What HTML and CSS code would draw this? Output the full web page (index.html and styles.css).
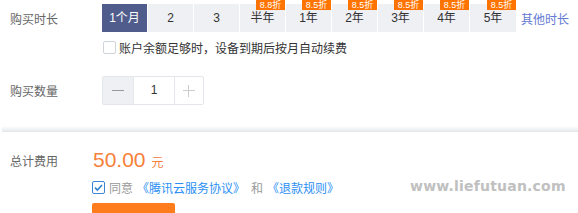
FILE: index.html
```html
<!DOCTYPE html>
<html lang="zh-CN">
<head>
<meta charset="utf-8">
<link rel="stylesheet" href="styles.css">
</head>
<body>
<div class="page">
  <div class="row row-duration">
    <div class="label">购买时长</div>
    <div class="tabs">
      <div class="tab active">1个月</div>
      <div class="tab">2</div>
      <div class="tab">3</div>
      <div class="tab">半年<span class="badge">8.8折</span></div>
      <div class="tab">1年<span class="badge">8.5折</span></div>
      <div class="tab">2年<span class="badge">8.5折</span></div>
      <div class="tab">3年<span class="badge">8.5折</span></div>
      <div class="tab">4年<span class="badge">8.5折</span></div>
      <div class="tab">5年<span class="badge">8.5折</span></div>
    </div>
    <a class="other">其他时长</a>
  </div>
  <div class="row-renew">
    <span class="checkbox"></span>
    <span class="renew-text">账户余额足够时，设备到期后按月自动续费</span>
  </div>
  <div class="row row-qty">
    <div class="label">购买数量</div>
    <div class="stepper">
      <span class="step minus"></span>
      <span class="qty">1</span>
      <span class="step plus"></span>
    </div>
  </div>
  <div class="divider"></div>
  <div class="row row-total">
    <div class="label label-total">总计费用</div>
    <div class="price"><span class="amount">50.00</span><span class="unit">元</span></div>
  </div>
  <div class="row-agree">
    <span class="checkbox checked"><svg width="11" height="11" viewBox="0 0 11 11"><path d="M2 5.6 L4.4 8 L9 3" fill="none" stroke="#2f7fd0" stroke-width="1.6"/></svg></span>
    <span class="gray">同意</span>
    <a class="link">《腾讯云服务协议》</a>
    <span class="gray and">和</span>
    <a class="link">《退款规则》</a>
  </div>
  <button class="buy">立即购买</button>
  <div class="watermark">www.liefutuan.com</div>
</div>
</body>
</html>
```

FILE: styles.css
```css
* { box-sizing: border-box; }
html, body { margin: 0; padding: 0; background: #fff; }
body {
  font-family: "Liberation Sans", "Noto Sans CJK SC", sans-serif;
  font-size: 12px;
  color: #333;
  width: 578px;
  height: 213px;
  overflow: hidden;
}
.page { position: relative; height: 213px; }
.row { display: flex; align-items: center; }
.label { width: 102px; padding-left: 10px; color: #666; font-size: 12px; }
.row-duration { padding-top: 4px; height: 32px; }
.tabs { display: flex; height: 28px; }
.tab {
  position: relative;
  width: 46px;
  height: 28px;
  line-height: 28px;
  text-align: center;
  background: #eef0f3;
  border-right: 1px solid #fff;
  color: #333;
  font-size: 12px;
}
.tab:last-child { border-right: none; }
.tab.active { background: #505c8c; color: #fff; }
.badge {
  position: absolute;
  top: -4px;
  right: 0;
  width: 29px;
  height: 10px;
  line-height: 10px;
  background: #ff7400;
  color: #fff;
  font-size: 9px;
  text-align: center;
}
.other { margin-left: 5px; color: #6379d3; font-size: 12px; }
.row-renew { display: flex; align-items: center; padding-left: 103px; margin-top: 9px; height: 13px; }
.checkbox {
  width: 13px; height: 13px;
  border: 1px solid #cfd3da;
  border-radius: 2px;
  background: #fff;
  display: inline-flex; align-items: center; justify-content: center;
}
.renew-text { margin-left: 3px; color: #333; }
.row-qty { margin-top: 22px; height: 29px; }
.stepper { display: flex; height: 29px; border: 1px solid #e3e6ea; border-radius: 2px; }
.step { position: relative; width: 31px; height: 27px; }
.step.minus { background: #eef0f3; border-right: 1px solid #e3e6ea; }
.step.plus { width: 29px; border-left: 1px solid #e3e6ea; }
.step.minus::before, .step.plus::before {
  content: ""; position: absolute; left: 9px; top: 13px; width: 12px; height: 1px; background: #999;
}
.step.plus::before { left: 8px; background: #ccc; }
.step.plus::after {
  content: ""; position: absolute; left: 13px; top: 8px; width: 1px; height: 12px; background: #ccc;
}
.qty { width: 40px; text-align: center; line-height: 27px; color: #333; }
.divider {
  margin: 21px 0 0 2px;
  height: 6px;
  background: linear-gradient(to bottom, rgba(227,230,234,0), #e3e6ea);
}
.row-total { margin-top: 18px; height: 20px; }
.label-total { width: 93px; }
.price { display: flex; align-items: baseline; color: #f7803a; }
.amount { font-size: 21px; }
.unit { font-size: 12px; margin-left: 6px; }
.row-agree { display: flex; align-items: center; padding-left: 92px; margin-top: 11px; height: 13px; }
.checkbox.checked { border-color: #3b86d6; }
.gray { color: #999; margin-left: 4px; }
.link { color: #2b8ff5; margin-left: 4px; }
.and { margin-left: 6px; }
.buy {
  display: block;
  margin: 9px 0 0 92px;
  width: 83px; height: 32px;
  border: none; border-radius: 2px;
  background: #ff7c1c; color: #fff;
  font-family: inherit; font-size: 13px;
}
.watermark {
  position: absolute;
  left: 410px; top: 178px;
  color: #c0c0c0;
  font-family: "DejaVu Sans", sans-serif;
  font-weight: bold;
  font-size: 14px;
  letter-spacing: 0.2px;
}
```
